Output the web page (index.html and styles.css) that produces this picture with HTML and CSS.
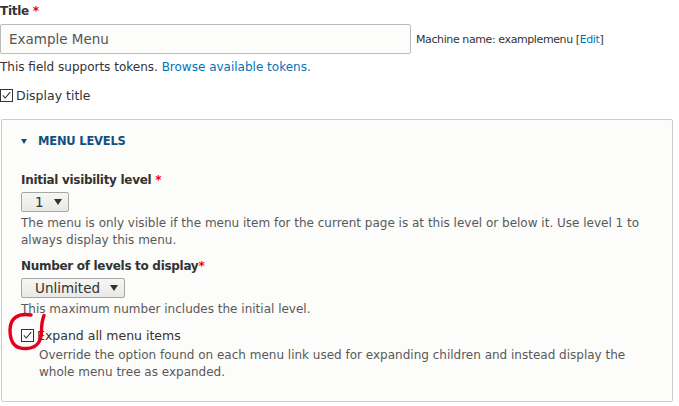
FILE: index.html
```html
<!DOCTYPE html>
<html>
<head>
<meta charset="utf-8">
<link rel="stylesheet" href="styles.css">
</head>
<body>
<div class="form">
  <div class="item title-item">
    <label class="label">Title <span class="req">*</span></label>
    <div class="title-row">
      <div class="text-input">Example Menu</div>
      <span class="machine">Machine name: examplemenu [<a class="link">Edit</a>]</span>
    </div>
    <div class="desc">This field supports tokens. <a class="link">Browse available tokens.</a></div>
  </div>
  <div class="check-row top-check">
    <span class="cb"><svg width="13" height="13" viewBox="0 0 13 13"><rect x="0.5" y="0.5" width="12" height="12" fill="#fff" stroke="#333"/><path d="M2.8 6.4 L5.2 9 L10.2 3.2" fill="none" stroke="#333" stroke-width="1.1"/></svg></span>
    <span class="check-label">Display title</span>
  </div>
  <div class="fieldset">
    <div class="legend"><span class="tri"></span>MENU LEVELS</div>
    <div class="item">
      <label class="label">Initial visibility level <span class="req">*</span></label>
      <div class="select sel-1"><span>1</span><span class="arrow"></span></div>
      <div class="desc grey">The menu is only visible if the menu item for the current page is at this level or below it. Use level 1 to always display this menu.</div>
    </div>
    <div class="item">
      <label class="label">Number of levels to display<span class="req">*</span></label>
      <div class="select sel-2"><span>Unlimited</span><span class="arrow"></span></div>
      <div class="desc grey">This maximum number includes the initial level.</div>
    </div>
    <div class="check-row inner-check">
      <span class="cb"><svg width="13" height="13" viewBox="0 0 13 13"><rect x="0.5" y="0.5" width="12" height="12" fill="#fff" stroke="#333"/><path d="M2.8 6.4 L5.2 9 L10.2 3.2" fill="none" stroke="#333" stroke-width="1.1"/></svg></span>
      <span class="check-label">Expand all menu items</span>
    </div>
    <div class="desc grey check-desc">Override the option found on each menu link used for expanding children and instead display the whole menu tree as expanded.</div>
  </div>
</div>
<svg class="annot" width="60" height="50" viewBox="0 310 60 50"><path d="M31 315 C18 313, 10 318, 10 330 C10 344, 16 349, 27 348.5 C37 348, 41.5 341, 41.5 331 C41.5 323, 43 318, 44 315.5" fill="none" stroke="#e4001c" stroke-width="3.4" stroke-linecap="round"/></svg>
</body>
</html>
```
FILE: styles.css
```css
html, body {
  margin: 0;
  padding: 0;
  background: #fff;
}
body {
  font-family: "DejaVu Sans", Verdana, sans-serif;
  font-size: 12px;
  color: #333;
  position: relative;
  width: 679px;
  height: 406px;
  overflow: hidden;
}
.form {
  padding-top: 3px;
}
.label {
  display: block;
  font-weight: bold;
  font-size: 12px;
  letter-spacing: -0.3px;
  line-height: 17px;
  color: #333;
}
.req {
  color: #e00;
}
.title-row {
  display: flex;
  align-items: center;
  margin-top: 4px;
}
.text-input {
  box-sizing: border-box;
  width: 411px;
  height: 30px;
  border: 1px solid #bbb;
  border-radius: 2px;
  background: #fcfcfa;
  padding: 0 8px;
  font-size: 13.5px;
  line-height: 28px;
  color: #555;
}
.machine {
  margin-left: 5px;
  font-size: 11px;
  letter-spacing: -0.4px;
  color: #333;
}
.link {
  color: #0074bd;
  text-decoration: none;
}
.desc {
  font-size: 12px;
  line-height: 17px;
  color: #333;
  margin-top: 5px;
}
.grey {
  color: #595959;
}
.check-row {
  display: flex;
  align-items: center;
}
.cb {
  display: inline-flex;
  width: 13px;
  height: 13px;
  margin-right: 3px;
}
.check-label {
  font-size: 12.5px;
  line-height: 17px;
  color: #333;
}
.top-check {
  margin-top: 11px;
}
.fieldset {
  box-sizing: border-box;
  margin: 15px 6px 0 1px;
  height: 283px;
  border: 1px solid #ccc;
  border-radius: 2px;
  background: #fcfcfa;
  padding: 0 19px;
}
.legend {
  display: flex;
  align-items: center;
  margin-top: 13px;
  font-weight: bold;
  font-size: 11.5px;
  letter-spacing: -0.2px;
  line-height: 17px;
  color: #13507f;
}
.tri {
  width: 0;
  height: 0;
  border-left: 3px solid transparent;
  border-right: 3px solid transparent;
  border-top: 5px solid #13507f;
  margin: 0 11px 0 0;
}
.fieldset .item {
  margin-top: 22px;
}
.fieldset .item + .item {
  margin-top: 9px;
}
.select {
  box-sizing: border-box;
  display: flex;
  align-items: center;
  height: 20px;
  margin-top: 3px;
  border: 1px solid #a6a6a6;
  border-radius: 2px;
  background: linear-gradient(#f6f6f3, #e8e8e4);
  font-size: 13.5px;
  color: #333;
  padding-left: 13px;
}
.sel-1 {
  width: 48px;
}
.sel-2 {
  width: 104px;
}
.arrow {
  width: 0;
  height: 0;
  border-left: 4px solid transparent;
  border-right: 4px solid transparent;
  border-top: 6px solid #333;
  margin-left: auto;
  margin-right: 6px;
}
.fieldset .desc {
  margin-top: 3px;
}
.inner-check {
  margin-top: 9px;
}
.check-desc {
  padding-left: 18px;
  margin-top: 3px !important;
}
.annot {
  position: absolute;
  left: 0;
  top: 310px;
}
```
